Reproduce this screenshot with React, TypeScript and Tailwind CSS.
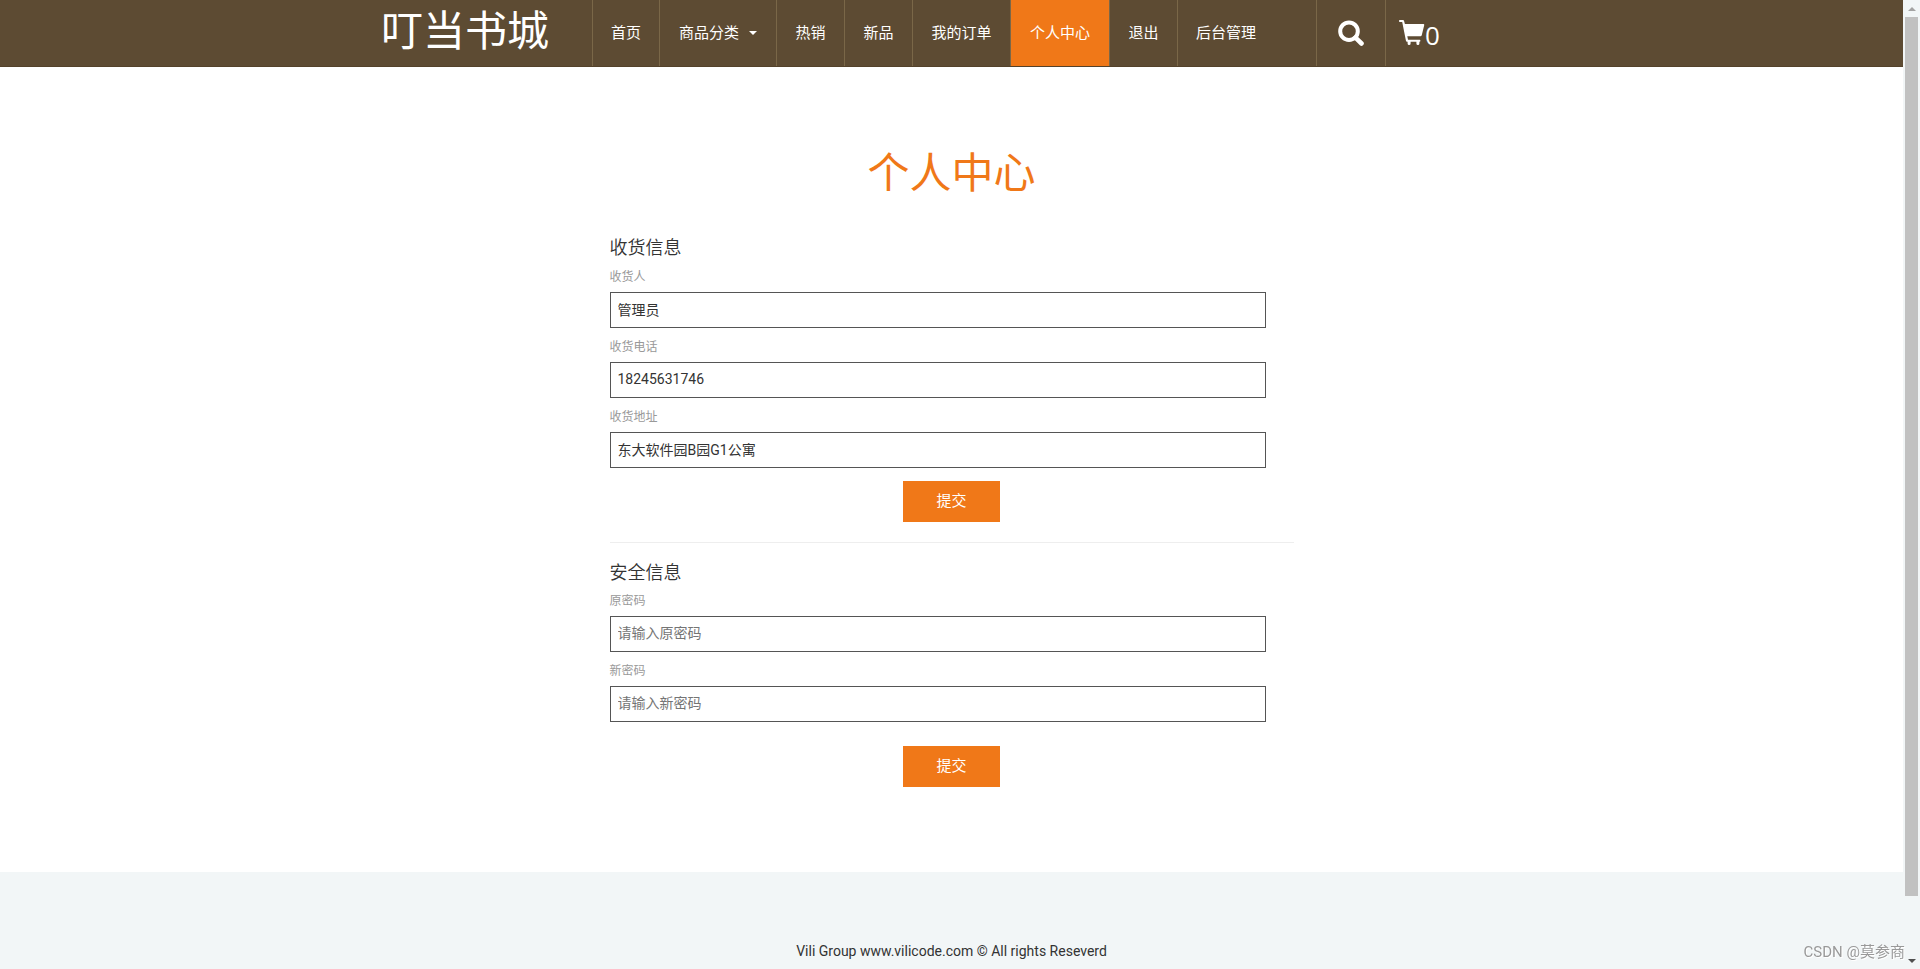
import React from "react";

const navItems = [
  { label: "首页", width: "w-[67px]" },
  { label: "商品分类", width: "w-[117px]", caret: true },
  { label: "热销", width: "w-[68px]" },
  { label: "新品", width: "w-[68px]" },
  { label: "我的订单", width: "w-[98px]" },
  { label: "个人中心", width: "w-[99px]", active: true },
  { label: "退出", width: "w-[68px]" },
];

function SearchIcon() {
  return (
    <svg width="26" height="26" viewBox="0 0 26 26" fill="none" stroke="#fff" aria-hidden="true">
      <circle cx="11" cy="11.2" r="8.8" strokeWidth="4" />
      <path d="M17.5 17.7 L23.5 23.5" strokeWidth="4.6" strokeLinecap="round" />
    </svg>
  );
}

function CartIcon() {
  return (
    <svg width="26" height="26" viewBox="0 0 26 26" fill="#fff" aria-hidden="true">
      <path d="M.8 0H4Q4.8 0 5 .8L5.9 4H24.4Q25.5 4 25.2 5.2L22.8 15Q22.5 16.2 21.4 16.2H8.3L9 19.8H20.6Q21.4 19.8 21.4 20.7T20.6 21.8H20.4V23.4Q20.4 25 18.9 25T17.4 23.4V21.8H11.6V23.4Q11.6 25 10.1 25T8.6 23.4V21.8H8Q7.2 21.8 7 21L3.2 2H.8Q0 2 0 1T.8 0Z" />
    </svg>
  );
}

function Field({ id, label, value, placeholder, type = "text" }: { id: string; label: string; value?: string; placeholder?: string; type?: string }) {
  return (
    <div className="mb-2">
      <label htmlFor={id} className="mb-1 block text-xs leading-[22px] text-[#999]">{label}</label>
      <input
        id={id}
        type={type}
        defaultValue={value}
        placeholder={placeholder}
        className="block h-9 w-[96%] border border-[#555] bg-white px-[7px] pb-[2px] text-sm text-[#333] outline-none placeholder:text-[#757575]"
      />
    </div>
  );
}

function Submit() {
  return (
    <button type="submit" className="mx-auto block h-[41px] w-[97px] bg-[#f07818] text-[15px] text-white">提交</button>
  );
}

export default function App() {
  return (
    <div className="flex min-h-screen bg-white font-[Roboto,'Noto_Sans_CJK_SC',sans-serif] text-[#333]">
      <div className="flex min-w-0 flex-1 flex-col">
        <header className="border-b border-[#54422b] bg-[#5d4b33] text-white">
          <div className="mx-auto flex h-[66px] max-w-[1141px]">
            <a href="#" className="w-[211px] shrink-0 text-[42px] leading-[64px]">叮当书城</a>
            <nav className="flex shrink-0 border-l border-[#7a6748] text-[15px]">
              {navItems.map((n) => (
                <a
                  key={n.label}
                  href="#"
                  className={`flex items-center justify-center border-r border-[#7a6748] ${n.width} ${n.active ? "bg-[#f07818]" : ""}`}
                >
                  {n.label}
                  {n.caret && <span className="ml-[10px] border-x-4 border-t-4 border-x-transparent border-t-white" />}
                </a>
              ))}
              <a href="#" className="flex w-[138px] items-center pl-[18px]">后台管理</a>
            </nav>
            <button type="button" aria-label="搜索" className="flex w-[70px] items-center justify-center border-x border-[#7a6748]">
              <SearchIcon />
            </button>
            <a href="#" aria-label="购物车" className="flex items-center pl-[13px] font-['Open_Sans',sans-serif] text-[26px]">
              <CartIcon />
              <span className="pt-1">0</span>
            </a>
          </div>
        </header>

        <main className="mx-auto w-full max-w-[684px] flex-1 pt-[73px] pb-20">
          <h1 className="text-center text-[42px] leading-[68px] text-[#f07818]">个人中心</h1>
          <form className="mt-[26px]" onSubmit={(e) => e.preventDefault()}>
            <h2 className="text-lg leading-[28px] font-[350]">收货信息</h2>
            <div className="pt-1">
              <Field id="receiver" label="收货人" value="管理员" />
              <Field id="phone" label="收货电话" value="18245631746" />
              <Field id="address" label="收货地址" value="东大软件园B园G1公寓" />
            </div>
            <div className="pt-[5px]"><Submit /></div>
          </form>
          <hr className="mt-5 mb-4 border-[#eee]" />
          <form onSubmit={(e) => e.preventDefault()}>
            <h2 className="text-lg leading-[28px] font-[350]">安全信息</h2>
            <div className="pt-[3px]">
              <Field id="old-password" label="原密码" placeholder="请输入原密码" type="password" />
              <Field id="new-password" label="新密码" placeholder="请输入新密码" type="password" />
            </div>
            <div className="pt-4"><Submit /></div>
          </form>
        </main>

        <footer className="bg-[#f2f6f7] pt-[69px] pb-2 text-center text-sm leading-5">
          Vili Group www.vilicode.com © All rights Reseverd
        </footer>
      </div>

      <div className="flex w-[17px] shrink-0 flex-col items-center bg-[#f2f6f7]" aria-hidden="true">
        <div className="flex h-[17px] items-center">
          <span className="border-x-4 border-b-4 border-x-transparent border-b-[#a3a3a3]" />
        </div>
        <div className="flex w-full flex-1 flex-col">
          <div className="mx-auto w-[13px] flex-[94] bg-[#c1c1c1]" />
          <div className="flex-[6]" />
        </div>
        <div className="flex h-[17px] items-center">
          <span className="border-x-4 border-t-4 border-x-transparent border-t-[#505050]" />
        </div>
      </div>

      <div className="fixed right-[15px] bottom-[5px] text-[15px] leading-6 text-[#999] [text-shadow:1px_1px_0_#fff]">CSDN @莫参商</div>
    </div>
  );
}
